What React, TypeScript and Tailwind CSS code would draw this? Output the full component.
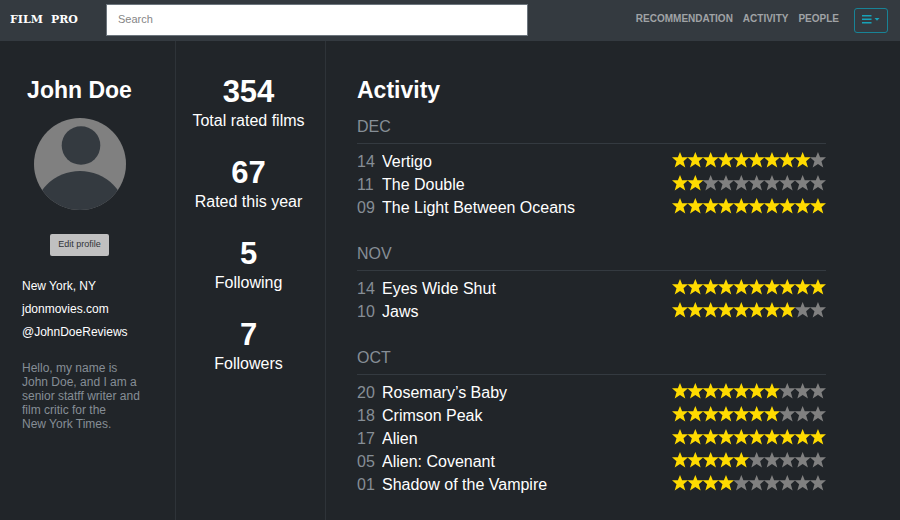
import React from "react";

type Film = { day: string; title: string; stars: number };
type Month = { name: string; films: Film[] };

const months: Month[] = [
  {
    name: "DEC",
    films: [
      { day: "14", title: "Vertigo", stars: 9 },
      { day: "11", title: "The Double", stars: 2 },
      { day: "09", title: "The Light Between Oceans", stars: 10 },
    ],
  },
  {
    name: "NOV",
    films: [
      { day: "14", title: "Eyes Wide Shut", stars: 10 },
      { day: "10", title: "Jaws", stars: 8 },
    ],
  },
  {
    name: "OCT",
    films: [
      { day: "20", title: "Rosemary’s Baby", stars: 7 },
      { day: "18", title: "Crimson Peak", stars: 7 },
      { day: "17", title: "Alien", stars: 10 },
      { day: "05", title: "Alien: Covenant", stars: 5 },
      { day: "01", title: "Shadow of the Vampire", stars: 4 },
    ],
  },
];

const stats = [
  { value: "354", label: "Total rated films" },
  { value: "67", label: "Rated this year" },
  { value: "5", label: "Following" },
  { value: "7", label: "Followers" },
];

const STAR = "M8 0 L10.1 5.2 L16 5.2 L11.5 9.2 L13.3 15.6 L8 12 L2.7 15.6 L4.5 9.2 L0 5.2 L5.9 5.2 Z";

function Rating({ stars }: { stars: number }) {
  return (
    <svg width="154" height="16" viewBox="0 0 154 16" role="img" aria-label={`${stars} out of 10 stars`} className="mb-1 shrink-0">
      {Array.from({ length: 10 }, (_, i) => (
        <path key={i} d={STAR} transform={`translate(${i * 15.33} 0)`} fill={i < stars ? "#ffdb00" : "#808080"} />
      ))}
    </svg>
  );
}

function Header() {
  return (
    <header className="flex h-[41px] shrink-0 items-center bg-[#343a40] pr-3 pl-[10px]">
      <a href="#" className="flex w-24 shrink-0 gap-2 font-['DejaVu_Serif',serif] text-[11px] font-bold text-white">
        <span>FILM</span> <span>PRO</span>
      </a>
      <input
        type="search"
        aria-label="Search"
        placeholder="Search"
        className="mb-px h-8 w-[422px] min-w-0 border border-[#6c757d] bg-white px-[11px] pb-[2px] text-[11px] text-gray-800 outline-none placeholder:text-[#868686]"
      />
      <nav className="ml-auto flex items-center gap-[10px] pb-1 text-[10px] font-bold text-[#a0a3a6]">
        <a href="#">RECOMMENDATION</a>
        <a href="#">ACTIVITY</a>
        <a href="#">PEOPLE</a>
      </nav>
      <button type="button" aria-label="Menu" className="ml-[15px] flex h-[25px] w-[34px] shrink-0 items-center justify-center rounded-[3px] border border-[#188396] pb-[2px]">
        <svg width="18" height="9" viewBox="0 0 18 9" fill="#17a2b8" aria-hidden="true">
          <path d="M0 0h9.500v1.6H0zM0 3.5h9.500v1.6H0zM0 7h9.500v1.6H0zM12.500 3h5L15 5.800z" />
        </svg>
      </button>
    </header>
  );
}

function Avatar() {
  return (
    <svg width="92" height="92" viewBox="0 0 92 92" role="img" aria-label="John Doe" className="mx-auto">
      <defs>
        <clipPath id="portrait">
          <circle cx="46" cy="46" r="46" />
        </clipPath>
      </defs>
      <g clipPath="url(#portrait)">
        <rect width="92" height="92" fill="#808080" />
        <circle cx="47" cy="27.500" r="19.300" fill="#343a40" />
        <circle cx="46" cy="100" r="47" fill="#343a40" />
      </g>
    </svg>
  );
}

function Profile() {
  return (
    <aside className="w-44 shrink-0 border-r border-[#2e3338] px-[22px] pt-[33px]">
      <div className="-mx-2 flex flex-col items-center pr-4">
        <h1 className="text-[23px] font-bold leading-8">John Doe</h1>
        <div className="mt-3">
          <Avatar />
        </div>
        <button type="button" className="mt-6 h-[22px] w-[59px] rounded-[2px] bg-[#c0c0c0] text-[9px] text-[#303337]">
          Edit profile
        </button>
      </div>
      <ul className="mt-[19px] text-xs leading-[23px]">
        <li>New York, NY</li>
        <li>
          <a href="#">jdonmovies.com</a>
        </li>
        <li>
          <a href="#">@JohnDoeReviews</a>
        </li>
      </ul>
      <p className="mt-[17px] text-xs leading-[14px] text-[#868e96]">
        Hello, my name is
        <br />
        John Doe, and I am a<br />
        senior statff writer and
        <br />
        film critic for the
        <br />
        New York Times.
      </p>
    </aside>
  );
}

function Stats() {
  return (
    <dl className="flex w-[150px] shrink-0 flex-col gap-[22px] border-r border-[#2e3338] pt-[33px] pr-1 text-center">
      {stats.map((s) => (
        <div key={s.label} className="flex flex-col-reverse">
          <dt className="text-base leading-6">{s.label}</dt>
          <dd className="text-[31px] font-bold leading-[35px]">{s.value}</dd>
        </div>
      ))}
    </dl>
  );
}

function Activity() {
  return (
    <main className="min-w-0 flex-1 pt-[33px] pr-[74px] pb-5 pl-[31px]">
      <h2 className="text-[23px] font-bold leading-8">Activity</h2>
      <div className="mt-[9px] flex flex-col gap-[23px]">
        {months.map((m) => (
          <section key={m.name}>
            <h3 className="border-b border-[#343a40] pb-1 text-base leading-6 text-[#868e96]">{m.name}</h3>
            <ul className="pt-[6px]">
              {m.films.map((f) => (
                <li key={f.title} className="flex h-[23px] items-center">
                  <span className="w-[25px] shrink-0 text-base leading-[23px] text-[#868e96]">{f.day}</span>
                  <span className="flex-1 truncate text-base leading-[23px]">{f.title}</span>
                  <Rating stars={f.stars} />
                </li>
              ))}
            </ul>
          </section>
        ))}
      </div>
    </main>
  );
}

export default function App() {
  return (
    <div className="flex min-h-screen flex-col bg-[#212529] font-['Liberation_Sans',Arial,sans-serif] text-white">
      <Header />
      <div className="flex flex-1">
        <Profile />
        <Stats />
        <Activity />
      </div>
    </div>
  );
}
